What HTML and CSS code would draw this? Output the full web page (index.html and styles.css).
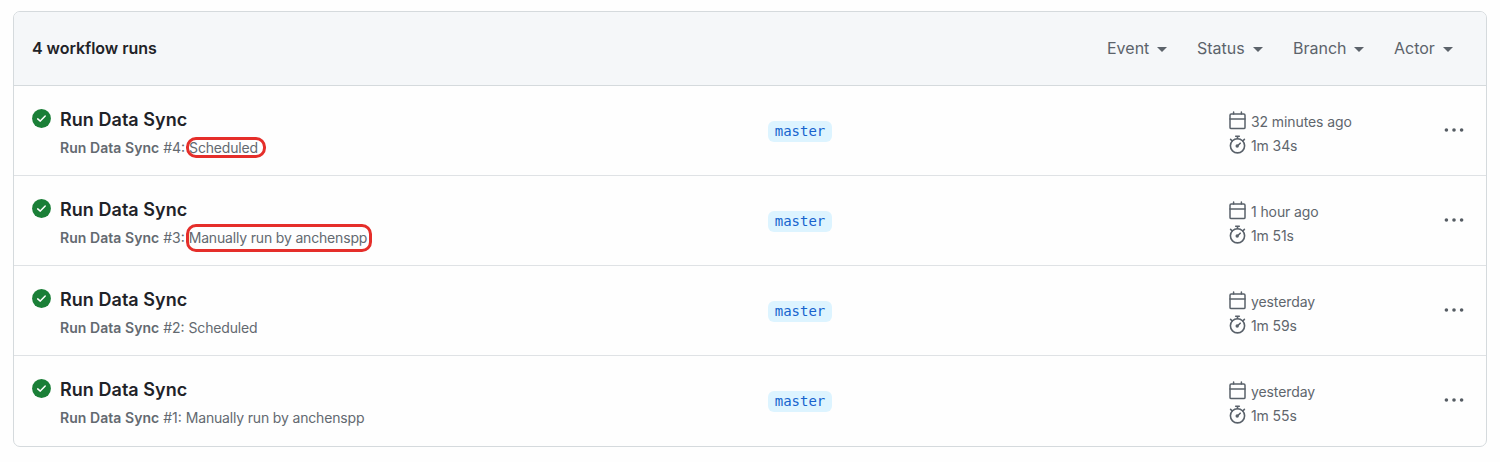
FILE: index.html
```html
<!DOCTYPE html>
<html lang="en">
<head>
<meta charset="utf-8">
<title>Workflow runs</title>
<link rel="stylesheet" href="styles.css">
</head>
<body>
<svg class="sprite" aria-hidden="true">
  <symbol id="check" viewBox="0 0 19 19"><circle cx="9.5" cy="9.5" r="9.4"/><path d="M5.7 9.9 8.3 12.1 13.2 7.1" fill="none" stroke="#fff" stroke-width="1.5" stroke-linecap="round" stroke-linejoin="round"/></symbol>
  <symbol id="calendar" viewBox="0 0 19 19"><g fill="none" stroke="#59616a" stroke-width="1.5" stroke-linecap="round"><rect x="2" y="3" width="15" height="14.6" rx="1.2"/><path d="M2 8H17M5.6 1V3M13.4 1V3"/></g></symbol>
  <symbol id="stopwatch" viewBox="0 0 19 19"><g fill="none" stroke="#59616a" stroke-width="1.6" stroke-linecap="round"><circle cx="9.5" cy="10.8" r="7.1"/><path d="M7.7 1.2H11.3M9.5 1.2V3.5M2.6 4.4 4.3 6M16.4 4.4 14.7 6M9.7 10.7 12.2 8.2"/></g><circle cx="9.2" cy="11" r="1.7" fill="#59616a"/></symbol>
  <symbol id="kebab" viewBox="0 0 20 6"><circle cx="2.4" cy="3" r="1.8"/><circle cx="10" cy="3" r="1.8"/><circle cx="17.6" cy="3" r="1.8"/></symbol>
</svg>
<main class="runs">
  <header class="runs-header">
    <strong class="count">4 workflow runs</strong>
    <nav class="filters">
      <span class="filter event">Event</span><span class="filter status">Status</span><span class="filter branch-filter">Branch</span><span class="filter actor">Actor</span>
    </nav>
  </header>
  <section class="run">
    <svg class="check"><use href="#check"/></svg>
    <div class="info"><h2 class="title">Run Data Sync</h2><p class="sub"><b class="name">Run Data Sync</b> #4: <span class="trigger">Scheduled<i class="mark mark-small"></i></span></p></div>
    <div class="branch"><span class="label">master</span></div>
    <div class="meta"><div class="item"><svg class="icon"><use href="#calendar"/></svg>32 minutes ago</div><div class="item"><svg class="icon"><use href="#stopwatch"/></svg>1m 34s</div></div>
    <svg class="kebab"><use href="#kebab"/></svg>
  </section>
  <section class="run">
    <svg class="check"><use href="#check"/></svg>
    <div class="info"><h2 class="title">Run Data Sync</h2><p class="sub"><b class="name">Run Data Sync</b> #3: <span class="trigger">Manually run by anchenspp<i class="mark mark-large"></i></span></p></div>
    <div class="branch"><span class="label">master</span></div>
    <div class="meta"><div class="item"><svg class="icon"><use href="#calendar"/></svg>1 hour ago</div><div class="item"><svg class="icon"><use href="#stopwatch"/></svg>1m 51s</div></div>
    <svg class="kebab"><use href="#kebab"/></svg>
  </section>
  <section class="run">
    <svg class="check"><use href="#check"/></svg>
    <div class="info"><h2 class="title">Run Data Sync</h2><p class="sub"><b class="name">Run Data Sync</b> #2: <span class="trigger">Scheduled</span></p></div>
    <div class="branch"><span class="label">master</span></div>
    <div class="meta"><div class="item"><svg class="icon"><use href="#calendar"/></svg>yesterday</div><div class="item"><svg class="icon"><use href="#stopwatch"/></svg>1m 59s</div></div>
    <svg class="kebab"><use href="#kebab"/></svg>
  </section>
  <section class="run">
    <svg class="check"><use href="#check"/></svg>
    <div class="info"><h2 class="title">Run Data Sync</h2><p class="sub"><b class="name">Run Data Sync</b> #1: <span class="trigger">Manually run by anchenspp</span></p></div>
    <div class="branch"><span class="label">master</span></div>
    <div class="meta"><div class="item"><svg class="icon"><use href="#calendar"/></svg>yesterday</div><div class="item"><svg class="icon"><use href="#stopwatch"/></svg>1m 55s</div></div>
    <svg class="kebab"><use href="#kebab"/></svg>
  </section>
</main>
</body>
</html>
```
FILE: styles.css
```css
* { box-sizing: border-box; }
body { margin: 0; padding: 11px 13px 0; background: #fefefe; color: #1f2328; font-family: Inter, "Liberation Sans", sans-serif; }
.sprite { display: none; }
.runs { border: 1px solid #d5dadd; border-radius: 7px; overflow: hidden; }
.runs-header { display: flex; align-items: center; justify-content: space-between; height: 74px; padding: 0 33px 2px 18px; background: #f5f7f9; border-bottom: 1px solid #d5dadd; }
.count { font-size: 16px; font-weight: 600; letter-spacing: -0.05px; }
.filters { display: flex; gap: 30px; font-size: 16px; color: #5c636b; }
.filter { display: flex; align-items: center; justify-content: space-between; }
.filter::after { content: ""; border: 5px solid transparent; border-top-color: #5c636b; border-bottom: 0; margin-top: 3px; }
.event { width: 60px; }
.status { width: 66px; }
.branch-filter { width: 71px; }
.actor { width: 59px; }
.run { display: grid; grid-template-columns: 28px 708px 460px 216px 20px; height: 90px; padding-left: 18px; border-bottom: 1px solid #dfe2e5; }
.run:last-child { border-bottom: 0; }
.check { width: 19px; height: 19px; margin-top: 23px; fill: #1a7f37; }
.title { margin: 21px 0 0; font-size: 18px; line-height: 26px; font-weight: 600; letter-spacing: 0.04px; }
.sub { margin: 5px 0 0; font-size: 14px; line-height: 20px; color: #636970; white-space: nowrap; }
.name { font-weight: 600; letter-spacing: 0.05px; }
.trigger { position: relative; letter-spacing: -0.17px; }
.mark { position: absolute; border: 3px solid #e52e2a; pointer-events: none; }
.mark-small { left: -3px; top: -2px; width: 80px; height: 21px; border-radius: 10px; }
.mark-large { left: -3px; top: -5px; width: 186px; height: 28px; border-radius: 10px; }
.branch { padding-top: 35px; }
.label { display: flex; align-items: center; justify-content: center; width: 64px; height: 21px; padding-bottom: 2px; border-radius: 6px; background: #ddf4ff; color: #1764ce; font: 14px "DejaVu Sans Mono", monospace; }
.meta { padding-top: 24px; color: #5f666d; font-size: 14px; letter-spacing: -0.1px; }
.item { display: flex; align-items: center; gap: 4px; height: 24px; padding-bottom: 1px; }
.icon { width: 19px; height: 19px; margin-top: -2px; }
.kebab { width: 20px; height: 6px; margin-top: 41px; fill: #555c63; }
```
